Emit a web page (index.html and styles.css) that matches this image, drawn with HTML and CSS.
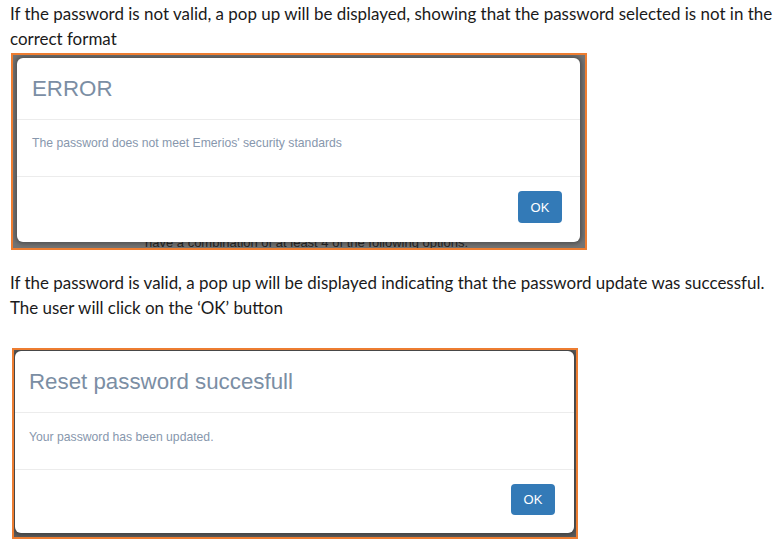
FILE: index.html
```html
<!DOCTYPE html>
<html lang="en">
<head>
<meta charset="utf-8">
<title>Password pop ups</title>
<link rel="stylesheet" href="styles.css">
</head>
<body>
<p class="para para-first">
  <span class="line">If the password is not valid, a pop up will be displayed, showing that the password selected is not in the</span>
  <span class="line">correct format</span>
</p>
<div class="shot shot-error">
  <div class="under-text">have a combination of at least 4 of the following options:</div>
  <div class="modal">
    <div class="modal-header"><h4 class="modal-title">ERROR</h4></div>
    <div class="modal-body">The password does not meet Emerios' security standards</div>
    <div class="modal-footer"><button class="btn">OK</button></div>
  </div>
</div>
<p class="para para-second">
  <span class="line">If the password is valid, a pop up will be displayed indicating that the password update was successful.</span>
  <span class="line">The user will click on the ‘OK’ button</span>
</p>
<div class="shot shot-success">
  <div class="modal">
    <div class="modal-header"><h4 class="modal-title">Reset password succesfull</h4></div>
    <div class="modal-body">Your password has been updated.</div>
    <div class="modal-footer"><button class="btn">OK</button></div>
  </div>
</div>
</body>
</html>
```
FILE: styles.css
```css
html, body {
  margin: 0;
  padding: 0;
  background: #ffffff;
}
body {
  width: 781px;
  height: 541px;
  overflow: hidden;
}
.para {
  margin: 0;
  padding-left: 10px;
  font-family: "Lato", "Liberation Sans", sans-serif;
  font-size: 16.95px;
  line-height: 25px;
  color: #1a1a1a;
}
.para .line {
  display: block;
  white-space: nowrap;
}
.para-first {
  padding-top: 1px;
}
.para-second {
  margin-top: 20px;
}
.shot {
  position: relative;
  box-sizing: border-box;
  border: 2px solid #ed7d31;
  background: #747474;
  overflow: hidden;
  font-family: "Liberation Sans", Arial, sans-serif;
}
.shot-error {
  margin: 2px 0 0 11px;
  width: 576px;
  height: 197px;
  padding: 3px 5px 6px 4px;
}
.shot-success {
  margin: 28px 0 0 12px;
  width: 566px;
  height: 191px;
  padding: 1px 2px 4px 1px;
  background: #5c5c5c;
}
.under-text {
  position: absolute;
  left: 132px;
  top: 180px;
  font-size: 13px;
  line-height: 16px;
  color: #262626;
  white-space: nowrap;
}
.modal {
  position: relative;
  z-index: 1;
  box-sizing: border-box;
  height: 100%;
  background: #ffffff;
  border-radius: 6px;
  box-shadow: 0 0 4px 2px rgba(0, 0, 0, 0.3);
  display: flex;
  flex-direction: column;
}
.modal-header {
  box-sizing: border-box;
  height: 62px;
  border-bottom: 1px solid #ececec;
  display: flex;
  align-items: center;
  padding-left: 15px;
}
.shot-success .modal-header {
  padding-left: 14px;
}
.modal-title {
  margin: 0;
  font-weight: normal;
  font-size: 22.3px;
  line-height: 24px;
  color: #7b8ea4;
}
.modal-body {
  box-sizing: border-box;
  height: 57px;
  border-bottom: 1px solid #ececec;
  padding: 15px 0 0 15px;
  font-size: 12.2px;
  line-height: 16px;
  color: #8797ad;
}
.shot-success .modal-body {
  padding: 16px 0 0 14px;
}
.modal-footer {
  flex: 1;
  display: flex;
  justify-content: flex-end;
  align-items: flex-start;
  padding: 14px 18px 0 0;
}
.shot-success .modal-footer {
  padding-right: 19px;
}
.btn {
  width: 44px;
  height: 32px;
  border: none;
  border-radius: 4px;
  background: #337ab7;
  color: #ffffff;
  font-family: "Liberation Sans", Arial, sans-serif;
  font-size: 13px;
  padding: 0;
}
.shot-success .btn {
  height: 31px;
}
```
